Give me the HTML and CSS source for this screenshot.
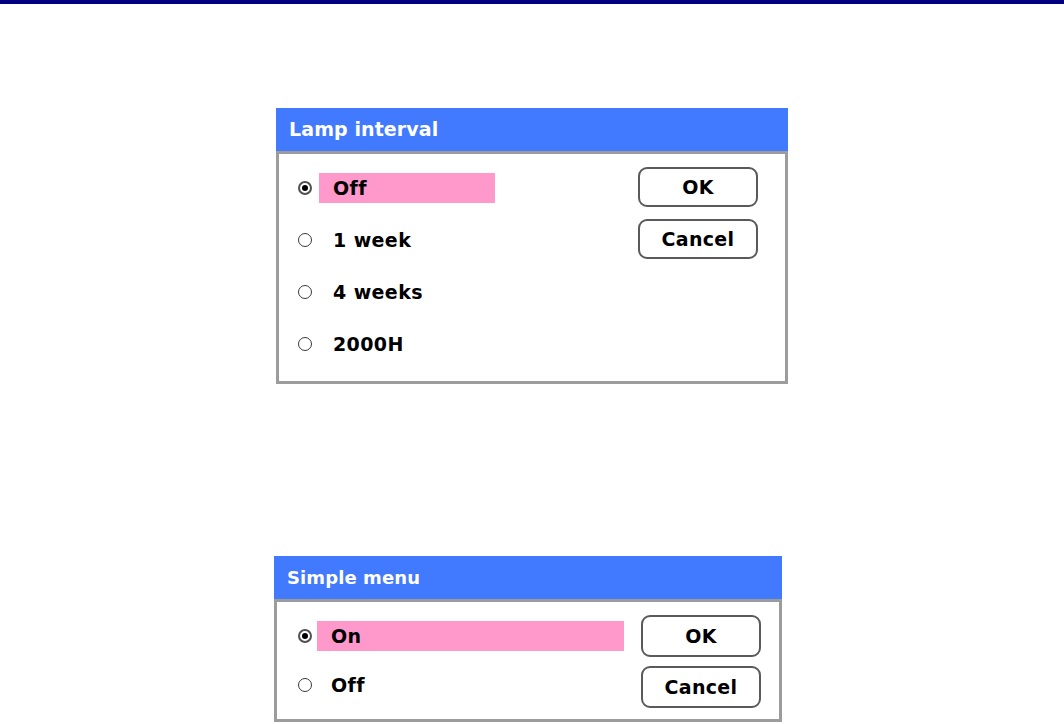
FILE: index.html
```html
<!DOCTYPE html>
<html>
<head>
<meta charset="utf-8">
<link rel="stylesheet" href="styles.css">
</head>
<body>
<div class="topbar"></div>
<div class="page">
  <div class="dialog dialog-lamp">
    <div class="title">Lamp interval</div>
    <div class="content">
      <div class="options">
        <div class="row"><span class="radio on"></span><span class="label selected">Off</span></div>
        <div class="row"><span class="radio"></span><span class="label">1 week</span></div>
        <div class="row"><span class="radio"></span><span class="label">4 weeks</span></div>
        <div class="row"><span class="radio"></span><span class="label">2000H</span></div>
      </div>
      <div class="buttons">
        <div class="btn">OK</div>
        <div class="btn">Cancel</div>
      </div>
    </div>
  </div>

  <div class="dialog dialog-simple">
    <div class="title">Simple menu</div>
    <div class="content">
      <div class="options">
        <div class="row"><span class="radio on"></span><span class="label selected">On</span></div>
        <div class="row"><span class="radio"></span><span class="label">Off</span></div>
      </div>
      <div class="buttons">
        <div class="btn">OK</div>
        <div class="btn">Cancel</div>
      </div>
    </div>
  </div>
</div>
</body>
</html>
```

FILE: styles.css
```css
html, body {
  margin: 0;
  padding: 0;
  background: #ffffff;
  font-family: "DejaVu Sans", "Liberation Sans", sans-serif;
  font-weight: bold;
  color: #000000;
}

.topbar {
  height: 4px;
  background: #000080;
}

.page {
  display: flex;
  flex-direction: column;
  align-items: flex-start;
}

.dialog {
  display: flex;
  flex-direction: column;
}

.dialog-lamp {
  width: 512px;
  margin-top: 104px;
  margin-left: 276px;
}

.dialog-simple {
  width: 508px;
  margin-top: 172px;
  margin-left: 274px;
}

.title {
  height: 43px;
  line-height: 43px;
  background: #4179ff;
  color: #ffffff;
  font-size: 19px;
  padding-left: 13px;
  letter-spacing: 0.1px;
}

.dialog-simple .title {
  padding-left: 13px;
  font-size: 18px;
}

.content {
  display: flex;
  align-items: flex-start;
  border: 3px solid #9c9c9c;
  background: #ffffff;
}

.options {
  display: flex;
  flex-direction: column;
  padding-top: 19px;
}

.dialog-lamp .options {
  padding-left: 19px;
  gap: 22px;
  padding-bottom: 22px;
}

.dialog-simple .options {
  padding-left: 21px;
  gap: 19px;
  padding-bottom: 19px;
}

.row {
  display: flex;
  align-items: center;
  height: 30px;
}

.radio {
  position: relative;
  width: 14px;
  height: 14px;
  box-sizing: border-box;
  border: 1.5px solid #3a3a3a;
  border-radius: 50%;
  background: #ffffff;
  flex: none;
}

.radio.on {
  border-color: #505050;
  border-width: 2px;
}

.radio.on::after {
  content: "";
  position: absolute;
  left: 2px;
  top: 2px;
  width: 6px;
  height: 6px;
  border-radius: 50%;
  background: #000000;
}

.label {
  height: 30px;
  line-height: 31px;
  font-size: 19px;
  padding-left: 14px;
  box-sizing: border-box;
  letter-spacing: 0.4px;
}

.dialog-lamp .label {
  width: 176px;
  margin-left: 7px;
}

.dialog-simple .label {
  width: 307px;
  margin-left: 5px;
}

.label.selected {
  background: #ff99cc;
}

.buttons {
  display: flex;
  flex-direction: column;
  margin-left: auto;
  margin-top: 13px;
}

.dialog-lamp .buttons {
  gap: 12px;
  margin-right: 27px;
}

.dialog-simple .buttons {
  gap: 9px;
  margin-right: 18px;
}

.btn {
  width: 120px;
  height: 40px;
  box-sizing: border-box;
  border: 2px solid #5a5a5a;
  border-radius: 9px;
  display: flex;
  align-items: center;
  justify-content: center;
  font-size: 19px;
  letter-spacing: 0.3px;
}

.dialog-simple .btn {
  height: 42px;
}
```
